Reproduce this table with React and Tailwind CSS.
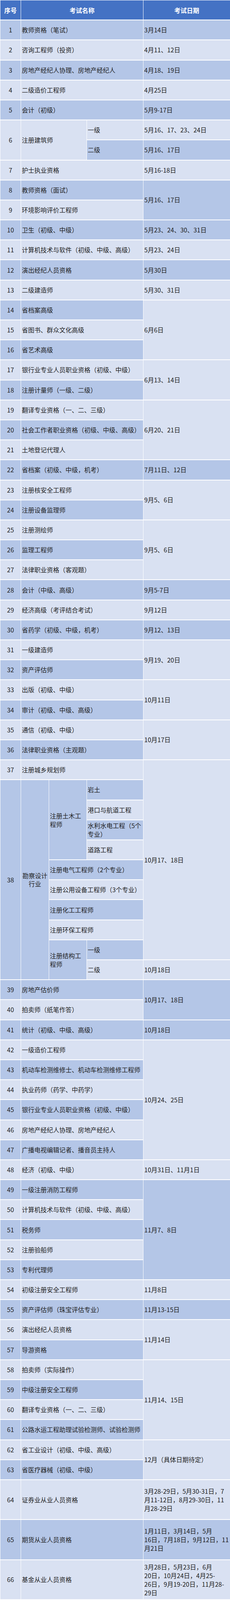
const DARK = "bg-[#b4c6e7]";
const LIGHT = "bg-[#d9e1f2]";

const rows = [
   { n: 1, name: "教师资格（笔试）", tone: "d", date: "3月14日" },
   { n: 2, name: "咨询工程师（投资）", tone: "l", date: "4月11、12日" },
   { n: 3, name: "房地产经纪人协理、房地产经纪人", tone: "d", date: "4月18、19日" },
   { n: 4, name: "二级造价工程师", tone: "l", date: "4月25日" },
   { n: 5, name: "会计（初级）", tone: "d", date: "5月9-17日" },
   { n: 6, special: "architect" },
   { n: 7, name: "护士执业资格", tone: "l", date: "5月16-18日" },
   { n: 8, name: "教师资格（面试）", tone: "d", date: "5月16、17日", dateSpan: "row-span-2" },
   { n: 9, name: "环境影响评价工程师", tone: "l" },
   { n: 10, name: "卫生（初级、中级）", tone: "d", date: "5月23、24、30、31日" },
   { n: 11, name: "计算机技术与软件（初级、中级、高级）", tone: "l", date: "5月23、24日" },
   { n: 12, name: "演出经纪人员资格", tone: "d", date: "5月30日" },
   { n: 13, name: "二级建造师", tone: "l", date: "5月30、31日" },
   { n: 14, name: "省档案高级", tone: "d", date: "6月6日", dateTone: "l", dateSpan: "row-span-3" },
   { n: 15, name: "省图书、群众文化高级", tone: "l" },
   { n: 16, name: "省艺术高级", tone: "d" },
   { n: 17, name: "银行业专业人员职业资格（初级、中级）", tone: "l", date: "6月13、14日", dateSpan: "row-span-2" },
   { n: 18, name: "注册计量师（一级、二级）", tone: "d" },
   { n: 19, name: "翻译专业资格（一、二、三级）", tone: "l", date: "6月20、21日", dateSpan: "row-span-3" },
   { n: 20, name: "社会工作者职业资格（初级、中级、高级）", tone: "d" },
   { n: 21, name: "土地登记代理人", tone: "l" },
   { n: 22, name: "省档案（初级、中级，机考）", tone: "d", date: "7月11日、12日" },
   { n: 23, name: "注册核安全工程师", tone: "l", date: "9月5、6日", dateSpan: "row-span-2" },
   { n: 24, name: "注册设备监理师", tone: "d" },
   { n: 25, name: "注册测绘师", tone: "l", date: "9月5、6日", dateSpan: "row-span-3" },
   { n: 26, name: "监理工程师", tone: "d" },
   { n: 27, name: "法律职业资格（客观题）", tone: "l" },
   { n: 28, name: "会计（中级、高级）", tone: "d", date: "9月5-7日" },
   { n: 29, name: "经济高级（考评结合考试）", tone: "l", date: "9月12日" },
   { n: 30, name: "省药学（初级、中级，机考）", tone: "d", date: "9月12、13日" },
   { n: 31, name: "一级建造师", tone: "l", date: "9月19、20日", dateSpan: "row-span-2" },
   { n: 32, name: "资产评估师", tone: "d" },
   { n: 33, name: "出版（初级、中级）", tone: "l", date: "10月11日", dateSpan: "row-span-2" },
   { n: 34, name: "审计（初级、中级、高级）", tone: "d" },
   { n: 35, name: "通信（初级、中级）", tone: "l", date: "10月17日", dateSpan: "row-span-2" },
   { n: 36, name: "法律职业资格（主观题）", tone: "d" },
   { n: 37, name: "注册城乡规划师", tone: "l", date: "10月17、18日", dateSpan: "row-span-10" },
   { n: 38, special: "survey" },
   { n: 39, name: "房地产估价师", tone: "d", date: "10月17、18日", dateSpan: "row-span-2" },
   { n: 40, name: "拍卖师（纸笔作答）", tone: "l" },
   { n: 41, name: "统计（初级、中级、高级）", tone: "d", date: "10月18日" },
   { n: 42, name: "一级造价工程师", tone: "l", date: "10月24、25日", dateSpan: "row-span-6" },
   { n: 43, name: "机动车检测维修士、机动车检测维修工程师", tone: "d" },
   { n: 44, name: "执业药师（药学、中药学）", tone: "l" },
   { n: 45, name: "银行业专业人员职业资格（初级、中级）", tone: "d" },
   { n: 46, name: "房地产经纪人协理、房地产经纪人", tone: "l" },
   { n: 47, name: "广播电视编辑记者、播音员主持人", tone: "d" },
   { n: 48, name: "经济（初级、中级）", tone: "l", date: "10月31日、11月1日" },
   { n: 49, name: "一级注册消防工程师", tone: "d", date: "11月7、8日", dateSpan: "row-span-5" },
   { n: 50, name: "计算机技术与软件（初级、中级、高级）", tone: "l" },
   { n: 51, name: "税务师", tone: "d" },
   { n: 52, name: "注册验船师", tone: "l" },
   { n: 53, name: "专利代理师", tone: "d" },
   { n: 54, name: "初级注册安全工程师", tone: "l", date: "11月8日" },
   { n: 55, name: "资产评估师（珠宝评估专业）", tone: "d", date: "11月13-15日" },
   { n: 56, name: "演出经纪人员资格", tone: "l", date: "11月14日", dateSpan: "row-span-2" },
   { n: 57, name: "导游资格", tone: "d" },
   { n: 58, name: "拍卖师（实际操作）", tone: "l", date: "11月14、15日", dateSpan: "row-span-4" },
   { n: 59, name: "中级注册安全工程师", tone: "d" },
   { n: 60, name: "翻译专业资格（一、二、三级）", tone: "l" },
   { n: 61, name: "公路水运工程助理试验检测师、试验检测师", tone: "d" },
   { n: 62, name: "省工业设计（初级、中级、高级）", tone: "l", date: "12月（具体日期待定）", dateSpan: "row-span-2" },
   { n: 63, name: "省医疗器械（初级、中级）", tone: "d" },
   {
      n: 64,
      name: "证券业从业人员资格",
      tone: "l",
      tall: true,
      date: ["3月28-29日，5月30-31日，7", "月11-12日，8月29-30日，11", "月28-29日"],
   },
   {
      n: 65,
      name: "期货从业人员资格",
      tone: "d",
      tall: true,
      date: ["1月11日，3月14日，5月", "16日，7月18日，9月12日，11", "月21日"],
   },
   {
      n: 66,
      name: "基金从业人员资格",
      tone: "l",
      tall: true,
      date: ["3月28日，5月23日，6月", "20日，10月24日，4月25-", "26日，9月19-20日，11月28-", "29日"],
   },
];

const Cell = ({ tone = "l", className = "", children }) => (
   <div
      className={`flex items-center px-[2px] text-[16px] leading-[21px] text-[#1f1f1f] ${
         tone === "d" ? DARK : LIGHT
      } ${className}`}
   >
      {children}
   </div>
);

const HeadCell = ({ className = "", children }) => (
   <div
      className={`flex items-center justify-center bg-[#4472c4] text-[16px] font-bold text-white ${className}`}
   >
      {children}
   </div>
);

const Architect = () => (
   <>
      <Cell tone="l" className="row-span-2 justify-center">6</Cell>
      <Cell tone="l" className="col-span-2 row-span-2">注册建筑师</Cell>
      <Cell tone="l">一级</Cell>
      <Cell tone="l">5月16、17、23、24日</Cell>
      <Cell tone="d">二级</Cell>
      <Cell tone="d">5月16、17日</Cell>
   </>
);

const Survey = () => (
   <>
      <Cell tone="d" className="row-span-10 justify-center">38</Cell>
      <Cell tone="d" className="row-span-10 justify-center text-center">勘察设计行业</Cell>
      <Cell tone="d" className="row-span-4 leading-[22px]">注册土木工程师</Cell>
      <Cell tone="d">岩土</Cell>
      <Cell tone="l">港口与航道工程</Cell>
      <Cell tone="d" className="leading-[22px]">
         <span>
            水利水电工程（5个
            <br />
            专业）
         </span>
      </Cell>
      <Cell tone="l">道路工程</Cell>
      <Cell tone="d" className="col-span-2 whitespace-nowrap">注册电气工程师（2个专业）</Cell>
      <Cell tone="l" className="col-span-2 whitespace-nowrap">注册公用设备工程师（3个专业）</Cell>
      <Cell tone="d" className="col-span-2 whitespace-nowrap">注册化工工程师</Cell>
      <Cell tone="l" className="col-span-2 whitespace-nowrap">注册环保工程师</Cell>
      <Cell tone="d" className="row-span-2 leading-[22px]">注册结构工程师</Cell>
      <Cell tone="d">一级</Cell>
      <Cell tone="l">二级</Cell>
      <Cell tone="l">10月18日</Cell>
   </>
);

const Row = ({ row }) => {
   if (row.special === "architect") return <Architect />;
   if (row.special === "survey") return <Survey />;

   const span = row.tall ? "row-span-2" : "";
   const dateTone = row.dateTone || row.tone;

   return (
      <>
         <Cell tone={row.tone} className={`justify-center ${span}`}>{row.n}</Cell>
         <Cell tone={row.tone} className={`col-span-3 whitespace-nowrap ${span}`}>{row.name}</Cell>
         {row.date && (
            <Cell
               tone={dateTone}
               className={`${row.tall ? "row-span-2 leading-[22px]" : row.dateSpan || ""}`}
            >
               {Array.isArray(row.date) ? (
                  <span>
                     {row.date.map((line, i) => (
                        <span key={i} className="block whitespace-nowrap">
                           {line}
                        </span>
                     ))}
                  </span>
               ) : (
                  row.date
               )}
            </Cell>
         )}
      </>
   );
};

const App = () => {
   return (
      <div className="w-[590px] bg-white">
         <div className="grid grid-cols-[52px_71px_96px_144px_1fr] auto-rows-[49.2px] gap-x-px gap-y-[2px] bg-white pl-px pt-px font-['Noto_Sans_CJK_SC','Microsoft_YaHei',sans-serif]">
            <HeadCell>序号</HeadCell>
            <HeadCell className="col-span-3">考试名称</HeadCell>
            <HeadCell>考试日期</HeadCell>

            {rows.map((row) => (
               <Row key={row.n} row={row} />
            ))}
         </div>
      </div>
   );
};

export default App;
